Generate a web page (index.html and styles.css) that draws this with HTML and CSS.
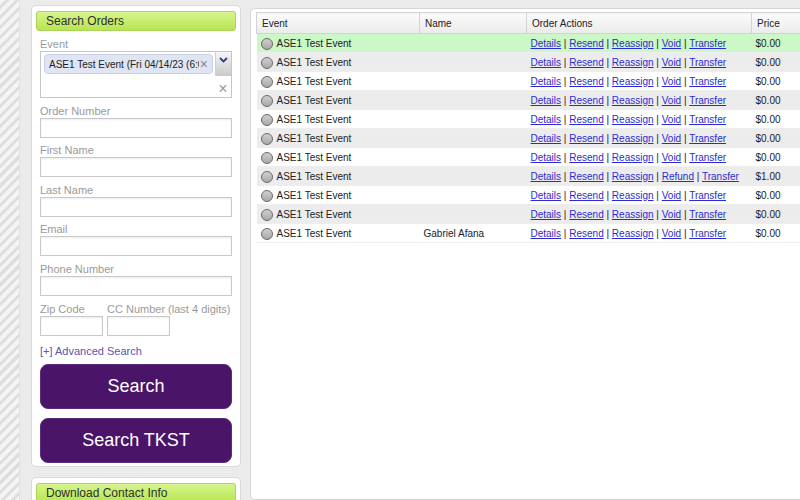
FILE: index.html
```html
<!DOCTYPE html>
<html lang="en">
<head>
    <meta charset="UTF-8">
    <title>Search Orders</title>
    <link rel="stylesheet" href="styles.css">
</head>
<body>
    <div class="page">
        <div class="stripes"></div>

        <aside class="sidebar">
            <div class="panel">
                <div class="panel-title">Search Orders</div>
                <form class="search-form">
                    <div class="field">
                        <label>Event</label>
                        <div class="multi">
                            <div class="multi-values">
                                <span class="chip">
                                    <span class="chip-text">ASE1 Test Event (Fri 04/14/23 (6:00 PM)</span>
                                    <span class="chip-x">&times;</span>
                                </span>
                            </div>
                            <div class="multi-side">
                                <div class="multi-toggle">
                                    <svg width="9" height="6" viewBox="0 0 9 6"><polyline points="1,1 4.5,4.5 8,1" fill="none" stroke="#2b3a9a" stroke-width="1.8"/></svg>
                                </div>
                                <div class="multi-clear">&times;</div>
                            </div>
                        </div>
                    </div>
                    <div class="field">
                        <label>Order Number</label>
                        <input type="text">
                    </div>
                    <div class="field">
                        <label>First Name</label>
                        <input type="text">
                    </div>
                    <div class="field">
                        <label>Last Name</label>
                        <input type="text">
                    </div>
                    <div class="field">
                        <label>Email</label>
                        <input type="text">
                    </div>
                    <div class="field">
                        <label>Phone Number</label>
                        <input type="text">
                    </div>
                    <div class="field-row">
                        <div class="field small">
                            <label>Zip Code</label>
                            <input type="text">
                        </div>
                        <div class="field small">
                            <label>CC Number (last 4 digits)</label>
                            <input type="text">
                        </div>
                    </div>
                    <a class="advanced" href="#">[+] Advanced Search</a>
                    <button type="button" class="btn">Search</button>
                    <button type="button" class="btn">Search TKST</button>
                </form>
            </div>

            <div class="panel">
                <div class="panel-title">Download Contact Info</div>
            </div>
        </aside>

        <main class="main">
            <table class="orders" id="orders">
                <colgroup>
                    <col style="width:163px">
                    <col style="width:107px">
                    <col style="width:225px">
                    <col style="width:70px">
                </colgroup>
                <thead>
                    <tr>
                        <th>Event</th>
                        <th>Name</th>
                        <th>Order Actions</th>
                        <th>Price</th>
                    </tr>
                </thead>
                <tbody></tbody>
            </table>
        </main>
    </div>

    <script>
        // rows of the orders table
        const orders = [
            { name: '', refund: false, price: '$0.00', selected: true },
            { name: '', refund: false, price: '$0.00' },
            { name: '', refund: false, price: '$0.00' },
            { name: '', refund: false, price: '$0.00' },
            { name: '', refund: false, price: '$0.00' },
            { name: '', refund: false, price: '$0.00' },
            { name: '', refund: false, price: '$0.00' },
            { name: '', refund: true, price: '$1.00' },
            { name: '', refund: false, price: '$0.00' },
            { name: '', refund: false, price: '$0.00' },
            { name: 'Gabriel Afana', refund: false, price: '$0.00' }
        ];

        const tbody = document.querySelector('#orders tbody');

        orders.forEach(order => {
            const row = document.createElement('tr');
            if (order.selected) row.className = 'selected';
            const actions = ['Details', 'Resend', 'Reassign', order.refund ? 'Refund' : 'Void', 'Transfer']
                .map(a => `<a href="#">${a}</a>`)
                .join(' | ');
            row.innerHTML = `
                <td><span class="radio"></span>ASE1 Test Event</td>
                <td>${order.name}</td>
                <td>${actions}</td>
                <td>${order.price}</td>
            `;
            tbody.appendChild(row);
        });
    </script>
</body>
</html>
```

FILE: styles.css
```css
* {
    box-sizing: border-box;
}

body {
    margin: 0;
    height: 500px;
    overflow: hidden;
    background: #ebebeb;
    color: #222;
    font-family: "Liberation Sans", Arial, sans-serif;
}

.page {
    display: flex;
    height: 500px;
}

.stripes {
    flex: none;
    width: 20px;
    background: repeating-linear-gradient(135deg, #f4f4f4 0, #f4f4f4 4px, #dedede 4px, #dedede 7px);
    border-right: 1px solid #e2e2e2;
}

/* sidebar */

.sidebar {
    flex: none;
    width: 221px;
    padding: 5px 0 0 11px;
}

.panel {
    background: #fff;
    border: 1px solid #d9d9d9;
    border-radius: 5px;
    padding: 5px 4px 2px;
    margin-bottom: 10px;
}

.panel-title {
    height: 20px;
    line-height: 19px;
    padding-left: 9px;
    font-size: 12px;
    color: #2f2f2f;
    background: linear-gradient(#d6f58f, #b9e550);
    border: 1px solid #abd45a;
    border-radius: 3px;
}

.search-form {
    padding: 6px 4px 0;
}

.field {
    margin-bottom: 5.6px;
}

.field label {
    display: block;
    font-size: 11px;
    line-height: 14px;
    color: #9a9a9a;
    white-space: nowrap;
}

.field input {
    display: block;
    width: 100%;
    height: 20px;
    margin: 0;
    border: 1px solid #c9c9c9;
    background: #fff;
    box-shadow: inset 0 1px 2px rgba(0, 0, 0, 0.08);
}

.field-row {
    display: flex;
    gap: 4px;
}

.field-row .field {
    margin-bottom: 0;
}

.field.small input {
    width: 63px;
}

/* event multiselect */

.multi {
    display: flex;
    height: 47px;
    border: 1px solid #c6c6c6;
    margin-bottom: 1.4px;
}

.multi-values {
    flex: 1;
    min-width: 0;
    padding: 2px 2px 0 3px;
}

.chip {
    display: flex;
    align-items: center;
    height: 20px;
    padding: 0 4px;
    background: #dfe5f3;
    border: 1px solid #c9d1e6;
    border-radius: 4px;
    font-size: 10px;
    color: #222;
}

.chip-text {
    flex: 1;
    overflow: hidden;
    white-space: nowrap;
}

.chip-x {
    flex: none;
    margin-left: 1px;
    font-size: 14px;
    color: #8a8a8a;
}

.multi-side {
    flex: none;
    width: 16px;
    display: flex;
    flex-direction: column;
}

.multi-toggle {
    height: 24px;
    display: flex;
    justify-content: center;
    padding-top: 5px;
    background: linear-gradient(#f6f6f6, #c9c9c9);
    border-left: 1px solid #d0d0d0;
}

.multi-clear {
    flex: 1;
    display: flex;
    align-items: flex-end;
    justify-content: center;
    font-size: 16px;
    line-height: 16px;
    color: #9a9a9a;
}

.advanced {
    display: block;
    margin-top: 8px;
    font-size: 11px;
    line-height: 14px;
    color: #5a54b6;
    text-decoration: none;
}

.btn {
    display: block;
    width: 100%;
    height: 45px;
    margin: 6px 0 9px;
    background: #4a1468;
    border: 1px solid #5c2b7b;
    border-radius: 8px;
    color: #fff;
    font-family: inherit;
    font-size: 18px;
}

.btn + .btn {
    margin-top: 0;
    margin-bottom: 1px;
}

/* orders table */

.main {
    flex: none;
    width: 577px;
    margin: 8px 0 0 9px;
    padding: 3px 5px;
    background: #fff;
    border: 1px solid #d6d6d6;
    border-radius: 5px;
}

.orders {
    width: 565px;
    border-collapse: collapse;
    table-layout: fixed;
    font-size: 10px;
}

.orders th {
    height: 21px;
    padding: 0 5px;
    text-align: left;
    font-weight: normal;
    color: #222;
    background: linear-gradient(#fbfbfb, #ebebeb);
    border: 1px solid #d3d3d3;
}

.orders td {
    height: 19px;
    padding: 1px 4px 0;
    white-space: nowrap;
    border-bottom: 1px solid #eeeeee;
}

.orders tbody tr:nth-child(even) td {
    background: #ececec;
}

.orders tbody tr.selected td {
    background: #ccf7c6;
}

.orders a {
    color: #2b2bd4;
}

.radio {
    display: inline-block;
    width: 12px;
    height: 12px;
    margin-right: 4px;
    vertical-align: -3px;
    border: 1px solid #6b6b6b;
    border-radius: 50%;
    background: linear-gradient(#cfcfcf, #a9a9a9);
}
```
